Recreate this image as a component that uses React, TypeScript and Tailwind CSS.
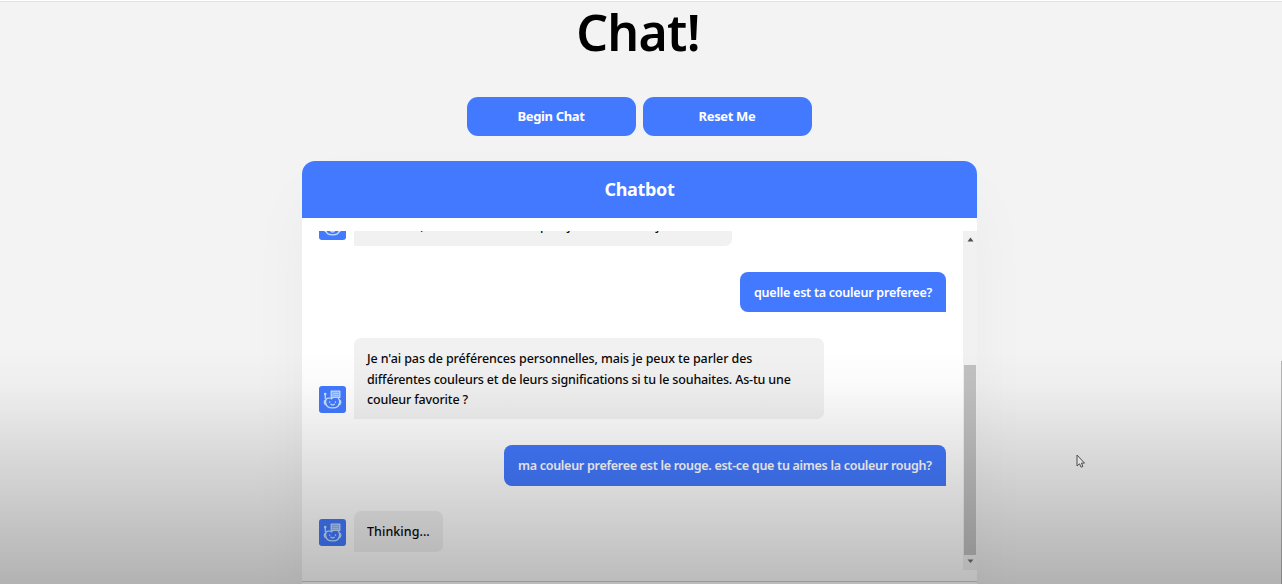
import type { ReactNode } from "react";

function BotAvatar() {
  return (
    <div className="mb-[6px] mr-[8px] flex h-[27px] w-[27px] shrink-0 items-center justify-center rounded-[3px] bg-[#4379ff]">
      <svg width="27" height="27" viewBox="0 0 27 27" fill="none" stroke="#c4e0ff" strokeWidth="1.3" strokeLinecap="round" strokeLinejoin="round">
        <path d="M12.2 5.2h8.6v6.2H14l-1.8 1.5z" fill="#85aeff" />
        <path d="M14 7.4h5M14 9.4h5" strokeWidth="0.8" />
        <path d="M11 12.2H9.6c-2 0-3 1.4-3 3.5 0 4 2.4 6.2 7 6.2s7-2.2 7-6.2c0-1.5-.4-2.6-1.2-3.2" />
        <path d="M6.5 14.2c-1.7.4-1.7 4 .5 4.3M20.6 14.2c1.7.4 1.7 4-.5 4.3" />
        <path d="M6.3 12.5V9.2" />
        <circle cx="6.2" cy="8" r=".7" />
        <path d="M10.7 15.8v.5M16.5 15.8v.5M12 18.2c1 .9 2.3.9 3.3 0" />
      </svg>
    </div>
  );
}

function BotMessage({ children, bubble }: { children: ReactNode; bubble: string }) {
  return (
    <li className="flex shrink-0 items-end">
      <BotAvatar />
      <div className={`whitespace-nowrap rounded-[7px] rounded-bl-none bg-[#f1f1f1] pl-[13px] pt-[11px] text-[#080808] ${bubble}`}>{children}</div>
    </li>
  );
}

function UserMessage({ children, bubble }: { children: ReactNode; bubble: string }) {
  return (
    <li className="flex shrink-0 justify-end">
      <div className={`whitespace-nowrap rounded-[8px] rounded-br-none bg-[#4379ff] pl-[14px] pt-[11px] font-semibold text-white ${bubble}`}>{children}</div>
    </li>
  );
}

export default function App() {
  return (
    <main className="relative flex h-[584px] w-[1282px] flex-col items-center overflow-hidden border-t border-white bg-[#f3f3f3] pr-[3px] font-['Trebuchet_MS','Noto_Sans',sans-serif]">
      <div className="h-px w-[1282px] shrink-0 self-start bg-[#e2e2de]" />
      <h1 className="mt-[-4px] h-[70px] shrink-0 pr-[3px] text-[50px] font-semibold leading-[68px] tracking-[-0.7px] text-black">Chat!</h1>
      <div className="mt-[29px] flex shrink-0 gap-[7px] pr-px text-[13px] font-bold text-white">
        <button className="h-[39px] w-[169px] rounded-[11px] bg-[#4379ff] tracking-[-0.35px]">Begin Chat</button>
        <button className="h-[39px] w-[169px] rounded-[11px] bg-[#4379ff] tracking-[-0.35px]">Reset Me</button>
      </div>
      <section className="mt-[25px] flex h-[460px] w-[675px] shrink-0 flex-col rounded-t-[13px] bg-white shadow-[0_30px_70px_-10px_rgba(0,0,0,0.05)]">
        <header className="flex h-[57px] shrink-0 items-center justify-center rounded-t-[13px] bg-[#4379ff] text-[18px] font-bold tracking-[-0.3px] text-white">Chatbot</header>
        <div className="mt-[13px] flex h-[339px] shrink-0">
          <ul className="flex w-[661px] flex-col justify-end gap-[26px] overflow-hidden pb-[18px] pl-[17px] pr-[17px] text-[12.5px] font-medium leading-[20.5px]">
            <BotMessage bubble="h-[41px] w-[378px]"><span className="pl-[12px] tracking-[-0.35px]">Bonsoir, dites-moi comment puis-je vous aider aujourd'hui ?</span></BotMessage>
            <UserMessage bubble="h-[40px] w-[206px]"><span className="tracking-[-0.24px]">quelle est ta couleur preferee?</span></UserMessage>
            <BotMessage bubble="h-[81px] w-[470px]">
              <p className="tracking-[-0.1px]">Je n'ai pas de préférences personnelles, mais je peux te parler des</p>
              <p className="tracking-[-0.16px]">différentes couleurs et de leurs significations si tu le souhaites. As-tu une</p>
              <p className="tracking-[-0.16px]">couleur favorite ?</p>
            </BotMessage>
            <UserMessage bubble="h-[41px] w-[442px]"><span className="tracking-[-0.28px]">ma couleur preferee est le rouge. est-ce que tu aimes la couleur rough?</span></UserMessage>
            <BotMessage bubble="-mt-px h-[41px] w-[89px]"><span className="tracking-[0.05px]">Thinking...</span></BotMessage>
          </ul>
          <div className="flex w-[14px] flex-col items-center bg-[#f1f1f1]">
            <svg className="mt-[6px] shrink-0" width="7" height="5" viewBox="0 0 7 5"><path d="M.5 4.5 3.5.5l3 4z" fill="#505050" /></svg>
            <div className="mt-[123px] h-[190px] w-[12px] shrink-0 bg-[#c1c1c1]" />
            <svg className="mt-[4px] shrink-0" width="7" height="4" viewBox="0 0 7 4"><path d="M.5.5h6l-3 3.5z" fill="#707070" /></svg>
          </div>
        </div>
        <div className="mt-[11px] h-px shrink-0 bg-[#d1d1d1]" />
      </section>
      <div className="absolute bottom-0 right-0 h-[223px] w-px bg-[#b5b5b5]" />
      <svg className="absolute left-[1076px] top-[453px]" width="10" height="15" viewBox="0 0 10 15"><path d="M1 1v11l2.5-2.2 1.6 3.4 1.8-.8-1.5-3.3H8.5z" fill="#fff" stroke="#555" strokeWidth="1" /></svg>
      <div className="absolute inset-x-0 bottom-0 h-[234px] bg-[linear-gradient(to_bottom,rgba(0,0,0,0)_0%,rgba(0,0,0,0.02)_15%,rgba(0,0,0,0.075)_34%,rgba(0,0,0,0.18)_70%,rgba(0,0,0,0.265)_100%)]" />
    </main>
  );
}
